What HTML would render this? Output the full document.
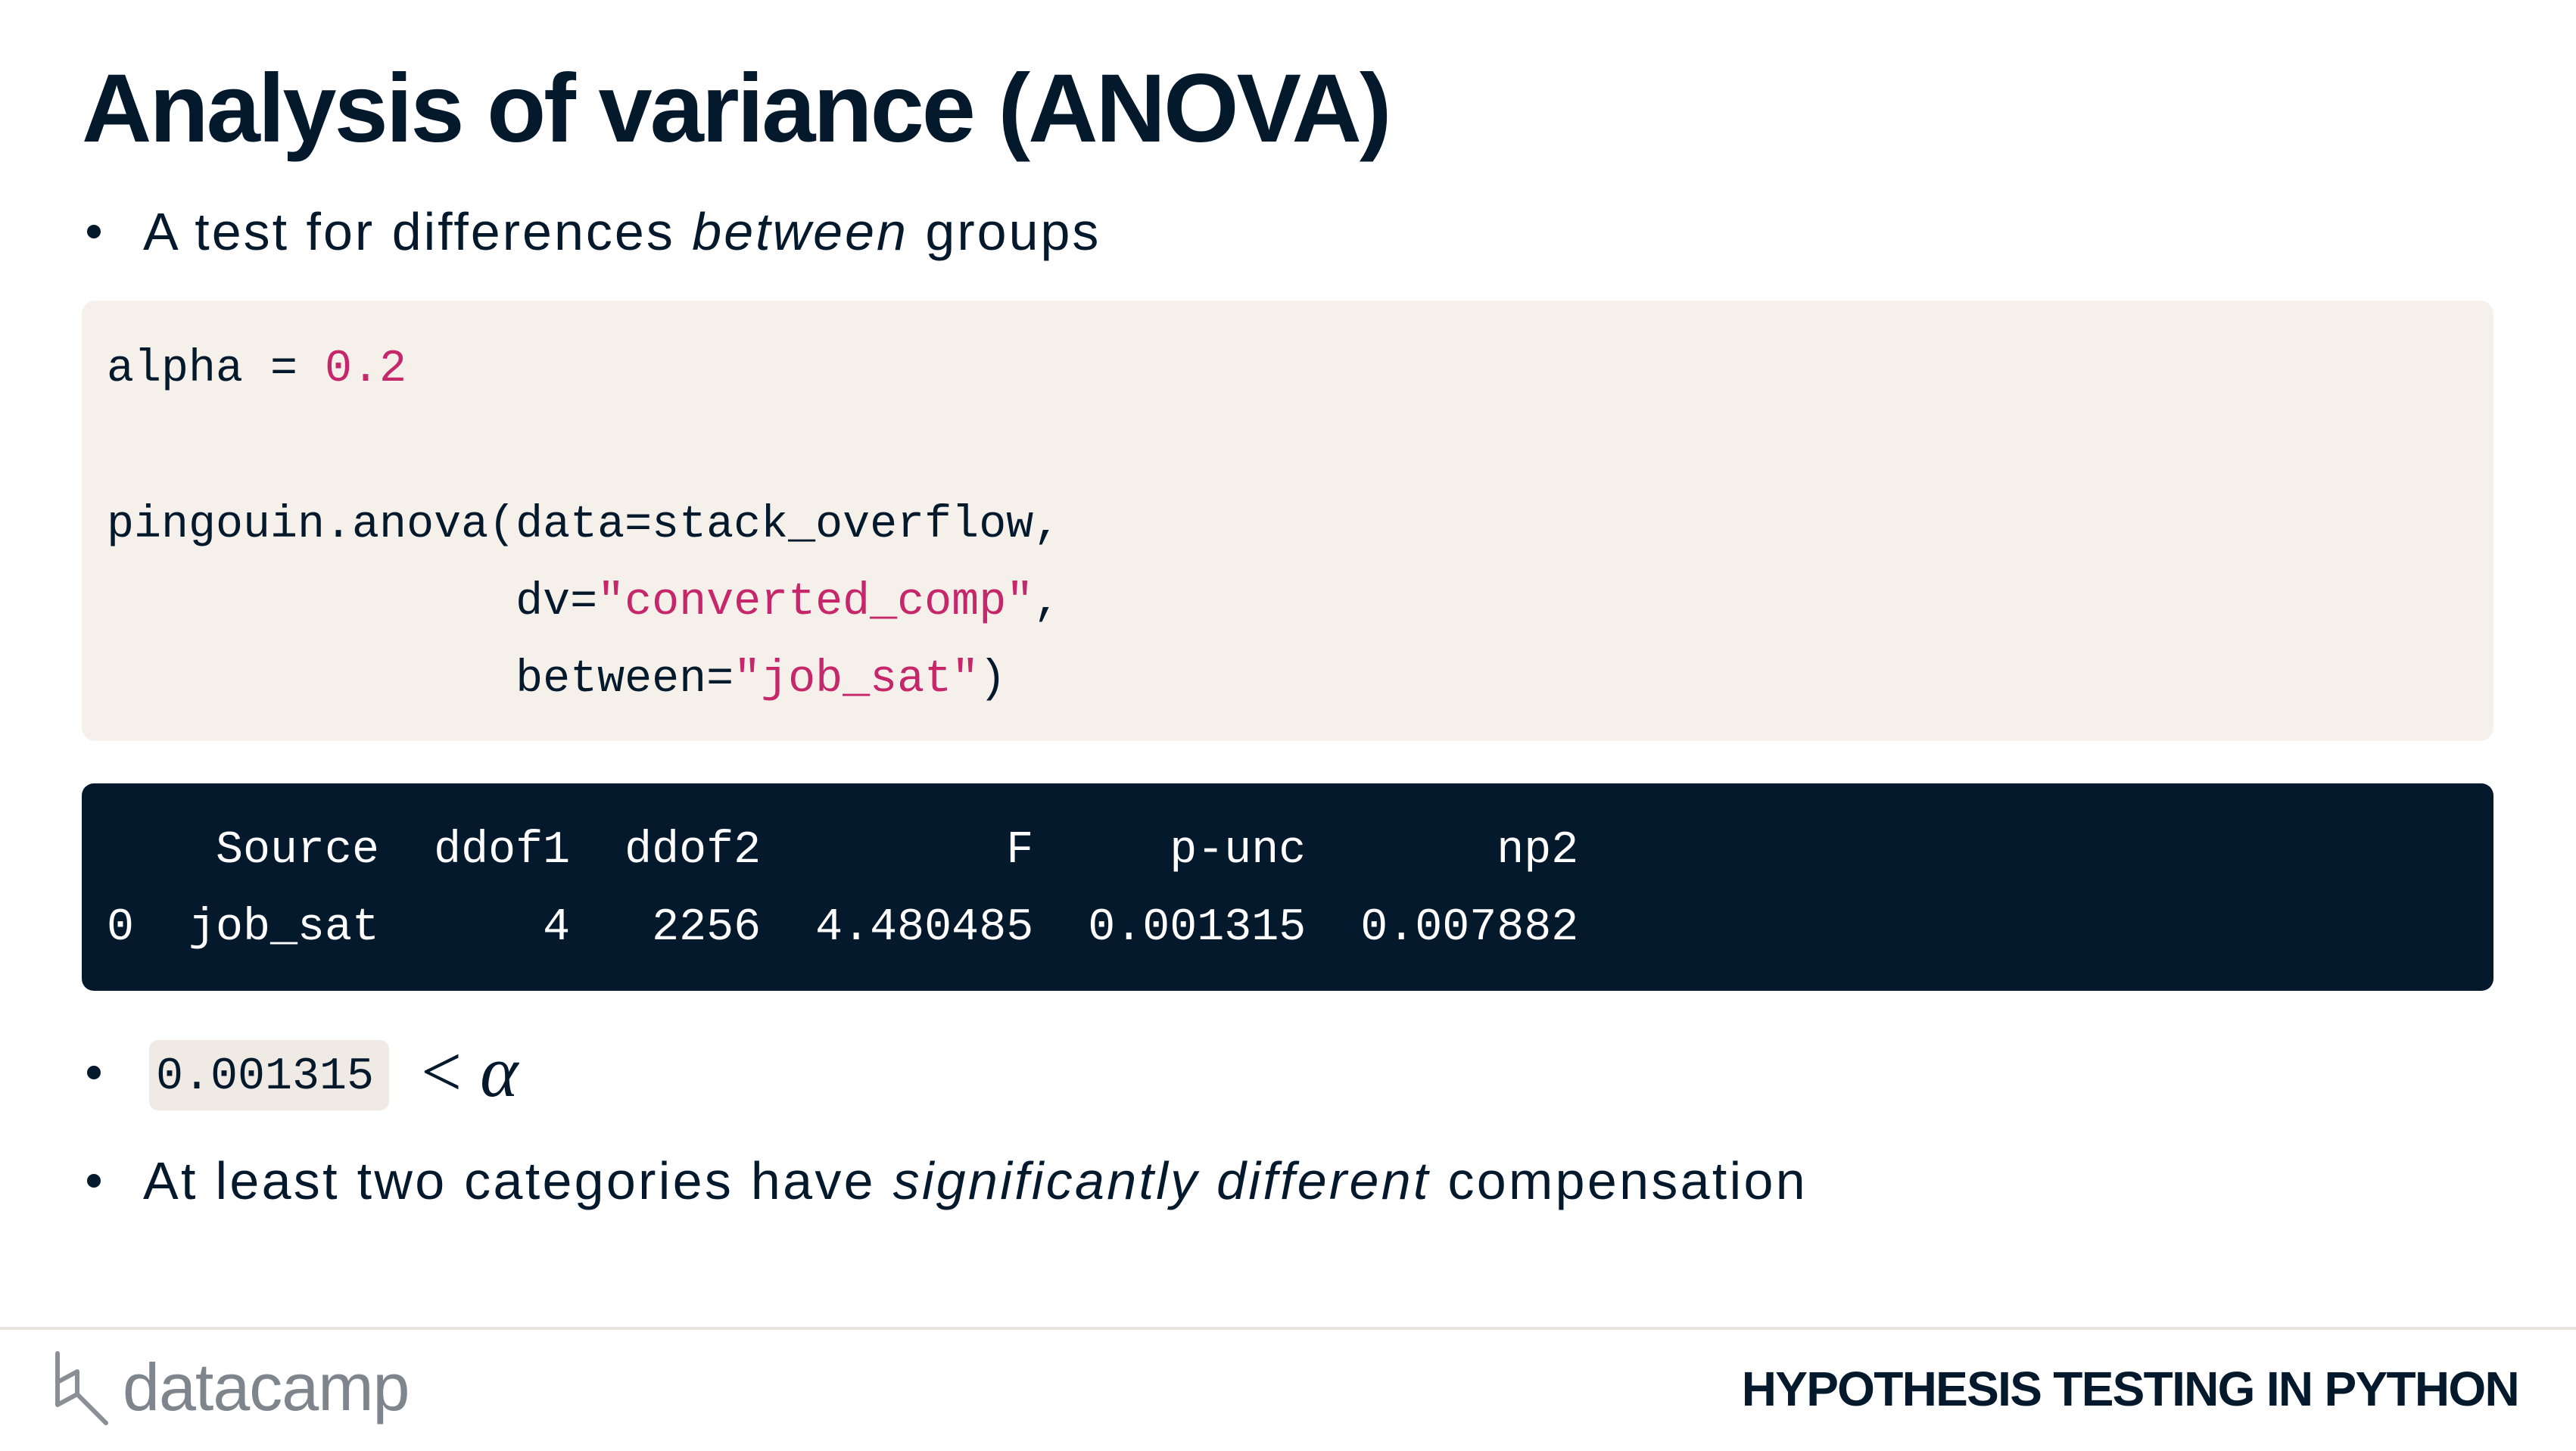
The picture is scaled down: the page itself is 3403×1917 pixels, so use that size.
<!DOCTYPE html>
<html><head><meta charset="utf-8"><style>
*{margin:0;padding:0;box-sizing:border-box}
body{width:3403px;height:1917px;background:#fff;position:relative;overflow:hidden;font-family:"Liberation Sans",sans-serif;color:#05192d}
.abs{position:absolute;white-space:pre}
.title{left:108px;top:64px;font-size:128px;font-weight:bold;letter-spacing:-3px;line-height:160px}
.bul{font-size:70px;line-height:80px;letter-spacing:3px}
.dot{position:absolute;width:18px;height:18px;border-radius:50%;background:#05192d}
.code{position:absolute;left:108px;top:397px;width:3186px;height:582px;background:#f5f1ea;border-radius:18px}
.mono{font-family:"Liberation Mono",monospace;font-size:60px;line-height:70px}
.pk{color:#c6266a}
.out{position:absolute;left:108px;top:1035px;width:3186px;height:274px;background:#05192d;border-radius:16px}
</style></head><body>
<div class="abs title">Analysis of variance (ANOVA)</div>

<div class="dot" style="left:115px;top:297px"></div>
<div class="abs bul" style="left:189px;top:266px">A test for differences <i>between</i> groups</div>

<div class="code"></div>
<div class="abs mono" style="left:141px;top:453px">alpha = <span class="pk">0.2</span></div>
<div class="abs mono" style="left:141px;top:659px">pingouin.anova(data=stack_overflow,</div>
<div class="abs mono" style="left:141px;top:761px">               dv=<span class="pk">"converted_comp"</span>,</div>
<div class="abs mono" style="left:141px;top:863px">               between=<span class="pk">"job_sat"</span>)</div>

<div class="out"></div>
<div class="abs mono" style="left:141px;top:1089px;color:#fff">    Source  ddof1  ddof2         F     p-unc       np2</div>
<div class="abs mono" style="left:141px;top:1191px;color:#fff">0  job_sat      4   2256  4.480485  0.001315  0.007882</div>

<div class="dot" style="left:115px;top:1408px"></div>
<div style="position:absolute;left:197px;top:1374px;width:317px;height:93px;background:#efeae4;border-radius:12px"></div>
<div class="abs mono" style="left:206px;top:1388px">0.001315</div>
<div class="abs" style="left:556px;top:1366px;font-family:'Liberation Serif',serif;font-size:96px;line-height:100px">&lt; <i>α</i></div>

<div class="dot" style="left:115px;top:1551px"></div>
<div class="abs bul" style="left:189px;top:1520px;letter-spacing:3.3px">At least two categories have <i>significantly different</i> compensation</div>

<div style="position:absolute;left:0;top:1753px;width:3403px;height:4px;background:#e8e4de"></div>
<svg style="position:absolute;left:70px;top:1784px" width="80" height="100" viewBox="0 0 80 100">
<path d="M6 4 V72 L32 58 V28 L6 42 M32 58 L70 96" fill="none" stroke="#8a8f96" stroke-width="6" stroke-linejoin="round" stroke-linecap="round"/>
</svg>
<div class="abs" style="left:162px;top:1783px;font-size:88px;line-height:100px;color:#7f858c;letter-spacing:-1px">datacamp</div>
<div class="abs" style="right:76px;top:1800px;font-size:64px;line-height:70px;font-weight:bold;letter-spacing:-1.7px">HYPOTHESIS TESTING IN PYTHON</div>
</body></html>
